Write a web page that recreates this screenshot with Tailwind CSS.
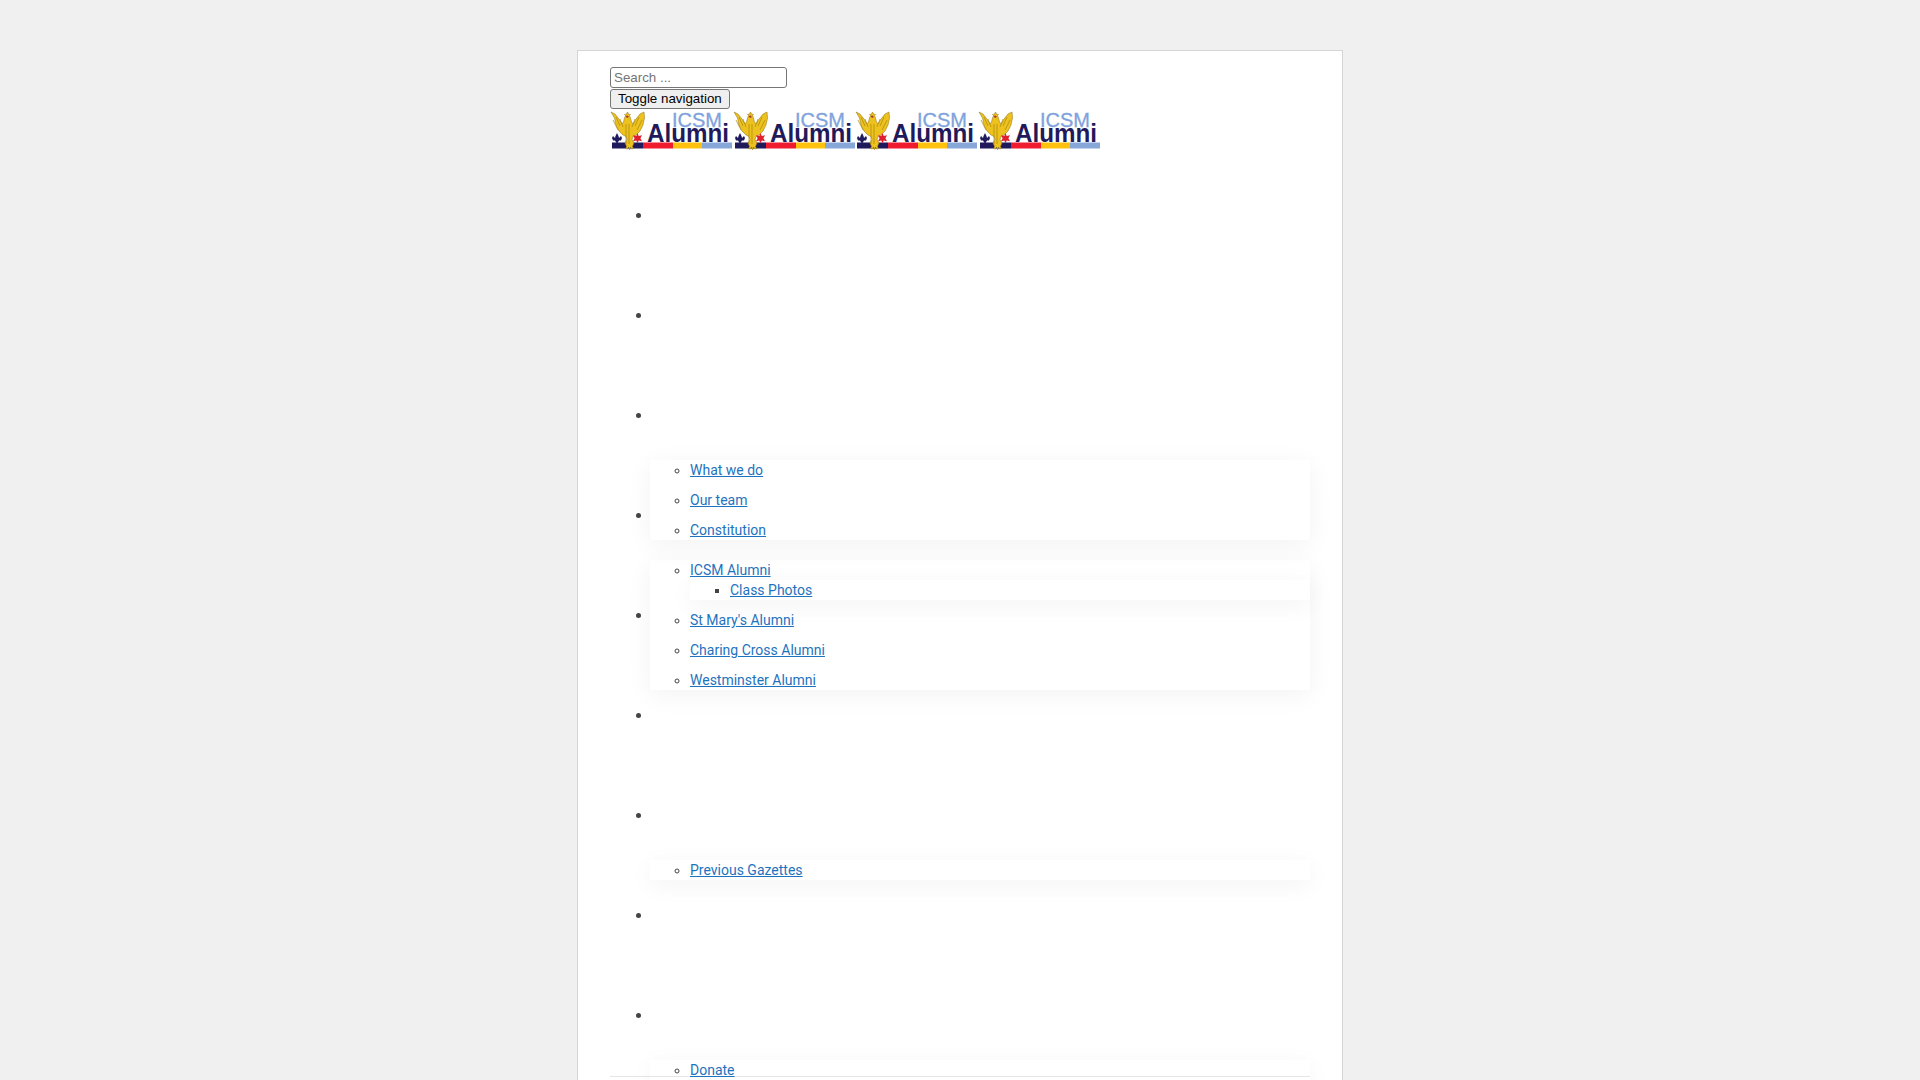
<!DOCTYPE html>
<html lang="en">
<head>
  <meta charset="UTF-8" />
  <meta name="viewport" content="width=device-width, initial-scale=1.0" />
  <title>ICSM Alumni</title>
  <script src="https://cdn.jsdelivr.net/npm/@tailwindcss/browser@4"></script>
</head>
<body class="bg-[#f0f0f0] h-screen overflow-hidden font-['Roboto',sans-serif] text-sm leading-5 text-[#444]">
  <div class="w-[766px] mx-auto mt-[50px] bg-white border border-[#d5d5d5] px-8 pt-4 pb-16">
    <form class="h-[42px] flex flex-col items-start gap-[1px] font-['Liberation_Sans',sans-serif] text-[13.33px] leading-[15px] text-black">
      <input type="text" placeholder="Search ..." class="w-[177px] h-[21px] border border-[#767676] rounded-[3px] px-[3px] placeholder:text-[#757575]" />
      <button type="button" class="h-[21px] px-[7px] bg-[#efefef] border border-[#767676] rounded-[3px]">Toggle navigation</button>
    </form>

    <div class="flex h-[51px] items-start">
      <svg class="w-[122.5px] h-[44px] shrink-0" viewBox="0 0 122.5 44">
        <rect x="2" y="33.500" width="31" height="6" fill="#1f1a5c" />
        <rect x="33" y="33.500" width="30" height="6" fill="#ee1c2e" />
        <rect x="63" y="33.500" width="29" height="6" fill="#fec20e" />
        <rect x="92" y="33.500" width="30" height="6" fill="#86a7d8" />
        <text x="62" y="18" textLength="50" lengthAdjust="spacingAndGlyphs" font-family="Liberation Sans" font-size="19.5" fill="#7fa3dc" stroke="#7fa3dc" stroke-width=".3">ICSM</text>
        <text x="37" y="32.500" textLength="82" lengthAdjust="spacingAndGlyphs" font-family="Liberation Sans" font-weight="700" font-size="25" fill="#1f1a5c">Alumni</text>
        <path d="M1 3l4 2 4 5 3 5 1.500-2 1-4 1-2.500-1-1 2-.5 1-2 1 2 2 .5-1 1 1 2.500 1 4 1.500 2 3-5 4-5 4-2 .5 6-1.500 7-3 6-4 4-3 1.500-1 3 2 3.500-1.500 3.500 1 2-2 .5-1-2-1 3-1-3-1 2-2-.5 1-2-1.500-3.500 2-3.500-1-3-3-1.500-4-4-3-6-1.500-7z" fill="#edc21f" stroke="#8a6d10" stroke-width=".5" />
        <path d="M6 8l4 9M10 10l3 8M29 8l-4 9M25 10l-3 8M16 15v20M19 15v20M3 11l5 10M32 11l-5 10" stroke="#a8860f" stroke-width=".7" fill="none" />
        <path d="M15.500 7l2-.5 1.500 1.500-2 1z" fill="#a33" />
        <path d="M7 24l1.500 3 .5 2 2-2 1 2-1 2.500H9l-1.500 2.500h-1L5 31.500H3l-1-2.500 1-2 2 2 .5-2z" fill="#1f1a5c" />
        <path d="M27.500 24l1.200 3 3.300-.8-1.600 3 1.600 3-3.300-.8-1.200 3-1.200-3-3.300 .8 1.600-3-1.600-3 3.300 .8z" fill="#e0202e" />
      </svg>
      <svg class="w-[122.5px] h-[44px] shrink-0" viewBox="0 0 122.5 44">
        <rect x="2" y="33.500" width="31" height="6" fill="#1f1a5c" />
        <rect x="33" y="33.500" width="30" height="6" fill="#ee1c2e" />
        <rect x="63" y="33.500" width="29" height="6" fill="#fec20e" />
        <rect x="92" y="33.500" width="30" height="6" fill="#86a7d8" />
        <text x="62" y="18" textLength="50" lengthAdjust="spacingAndGlyphs" font-family="Liberation Sans" font-size="19.5" fill="#7fa3dc" stroke="#7fa3dc" stroke-width=".3">ICSM</text>
        <text x="37" y="32.500" textLength="82" lengthAdjust="spacingAndGlyphs" font-family="Liberation Sans" font-weight="700" font-size="25" fill="#1f1a5c">Alumni</text>
        <path d="M1 3l4 2 4 5 3 5 1.500-2 1-4 1-2.500-1-1 2-.5 1-2 1 2 2 .5-1 1 1 2.500 1 4 1.500 2 3-5 4-5 4-2 .5 6-1.500 7-3 6-4 4-3 1.500-1 3 2 3.500-1.500 3.500 1 2-2 .5-1-2-1 3-1-3-1 2-2-.5 1-2-1.500-3.500 2-3.500-1-3-3-1.500-4-4-3-6-1.500-7z" fill="#edc21f" stroke="#8a6d10" stroke-width=".5" />
        <path d="M6 8l4 9M10 10l3 8M29 8l-4 9M25 10l-3 8M16 15v20M19 15v20M3 11l5 10M32 11l-5 10" stroke="#a8860f" stroke-width=".7" fill="none" />
        <path d="M15.500 7l2-.5 1.500 1.500-2 1z" fill="#a33" />
        <path d="M7 24l1.500 3 .5 2 2-2 1 2-1 2.500H9l-1.500 2.500h-1L5 31.500H3l-1-2.500 1-2 2 2 .5-2z" fill="#1f1a5c" />
        <path d="M27.500 24l1.200 3 3.300-.8-1.600 3 1.600 3-3.300-.8-1.200 3-1.200-3-3.300 .8 1.600-3-1.600-3 3.300 .8z" fill="#e0202e" />
      </svg>
      <svg class="w-[122.5px] h-[44px] shrink-0" viewBox="0 0 122.5 44">
        <rect x="2" y="33.500" width="31" height="6" fill="#1f1a5c" />
        <rect x="33" y="33.500" width="30" height="6" fill="#ee1c2e" />
        <rect x="63" y="33.500" width="29" height="6" fill="#fec20e" />
        <rect x="92" y="33.500" width="30" height="6" fill="#86a7d8" />
        <text x="62" y="18" textLength="50" lengthAdjust="spacingAndGlyphs" font-family="Liberation Sans" font-size="19.5" fill="#7fa3dc" stroke="#7fa3dc" stroke-width=".3">ICSM</text>
        <text x="37" y="32.500" textLength="82" lengthAdjust="spacingAndGlyphs" font-family="Liberation Sans" font-weight="700" font-size="25" fill="#1f1a5c">Alumni</text>
        <path d="M1 3l4 2 4 5 3 5 1.500-2 1-4 1-2.500-1-1 2-.5 1-2 1 2 2 .5-1 1 1 2.500 1 4 1.500 2 3-5 4-5 4-2 .5 6-1.500 7-3 6-4 4-3 1.500-1 3 2 3.500-1.500 3.500 1 2-2 .5-1-2-1 3-1-3-1 2-2-.5 1-2-1.500-3.500 2-3.500-1-3-3-1.500-4-4-3-6-1.500-7z" fill="#edc21f" stroke="#8a6d10" stroke-width=".5" />
        <path d="M6 8l4 9M10 10l3 8M29 8l-4 9M25 10l-3 8M16 15v20M19 15v20M3 11l5 10M32 11l-5 10" stroke="#a8860f" stroke-width=".7" fill="none" />
        <path d="M15.500 7l2-.5 1.500 1.500-2 1z" fill="#a33" />
        <path d="M7 24l1.500 3 .5 2 2-2 1 2-1 2.500H9l-1.500 2.500h-1L5 31.500H3l-1-2.500 1-2 2 2 .5-2z" fill="#1f1a5c" />
        <path d="M27.500 24l1.200 3 3.300-.8-1.600 3 1.600 3-3.300-.8-1.200 3-1.200-3-3.300 .8 1.600-3-1.600-3 3.300 .8z" fill="#e0202e" />
      </svg>
      <svg class="w-[122.5px] h-[44px] shrink-0" viewBox="0 0 122.5 44">
        <rect x="2" y="33.500" width="31" height="6" fill="#1f1a5c" />
        <rect x="33" y="33.500" width="30" height="6" fill="#ee1c2e" />
        <rect x="63" y="33.500" width="29" height="6" fill="#fec20e" />
        <rect x="92" y="33.500" width="30" height="6" fill="#86a7d8" />
        <text x="62" y="18" textLength="50" lengthAdjust="spacingAndGlyphs" font-family="Liberation Sans" font-size="19.5" fill="#7fa3dc" stroke="#7fa3dc" stroke-width=".3">ICSM</text>
        <text x="37" y="32.500" textLength="82" lengthAdjust="spacingAndGlyphs" font-family="Liberation Sans" font-weight="700" font-size="25" fill="#1f1a5c">Alumni</text>
        <path d="M1 3l4 2 4 5 3 5 1.500-2 1-4 1-2.500-1-1 2-.5 1-2 1 2 2 .5-1 1 1 2.500 1 4 1.500 2 3-5 4-5 4-2 .5 6-1.500 7-3 6-4 4-3 1.500-1 3 2 3.500-1.500 3.500 1 2-2 .5-1-2-1 3-1-3-1 2-2-.5 1-2-1.500-3.500 2-3.500-1-3-3-1.500-4-4-3-6-1.500-7z" fill="#edc21f" stroke="#8a6d10" stroke-width=".5" />
        <path d="M6 8l4 9M10 10l3 8M29 8l-4 9M25 10l-3 8M16 15v20M19 15v20M3 11l5 10M32 11l-5 10" stroke="#a8860f" stroke-width=".7" fill="none" />
        <path d="M15.500 7l2-.5 1.500 1.500-2 1z" fill="#a33" />
        <path d="M7 24l1.500 3 .5 2 2-2 1 2-1 2.500H9l-1.500 2.500h-1L5 31.500H3l-1-2.500 1-2 2 2 .5-2z" fill="#1f1a5c" />
        <path d="M27.500 24l1.200 3 3.300-.8-1.600 3 1.600 3-3.300-.8-1.200 3-1.200-3-3.300 .8 1.600-3-1.600-3 3.300 .8z" fill="#e0202e" />
      </svg>
    </div>

    <nav class="h-[917px] border-b border-[#e5e5e5]">
      <ul class="text-[#1e73be]">
        <li class="flex h-[100px] items-start">
          <span class="w-10 pt-[53px] pl-[26px] shrink-0"><span class="block size-[5px] rounded-full bg-[#444]"></span></span>
        </li>
        <li class="flex h-[100px] items-start">
          <span class="w-10 pt-[53px] pl-[26px] shrink-0"><span class="block size-[5px] rounded-full bg-[#444]"></span></span>
        </li>
        <li class="flex h-[100px] items-start">
          <span class="w-10 pt-[53px] pl-[26px] shrink-0"><span class="block size-[5px] rounded-full bg-[#444]"></span></span>
        </li>
        <li class="flex h-[100px] items-start">
          <span class="w-10 pt-[53px] pl-[26px] shrink-0"><span class="block size-[5px] rounded-full bg-[#444]"></span></span>
          <ul class="flex-1 pl-10 list-[circle] flex flex-col gap-[10px] shadow-[0_5px_25px_rgba(0,0,0,0.05)] marker:text-[#444]">
            <li><a href="#" class="underline">What we do</a></li>
            <li><a href="#" class="underline">Our team</a></li>
            <li><a href="#" class="underline">Constitution</a></li>
          </ul>
        </li>
        <li class="flex h-[100px] items-start">
          <span class="w-10 pt-[53px] pl-[26px] shrink-0"><span class="block size-[5px] rounded-full bg-[#444]"></span></span>
          <ul class="flex-1 pl-10 list-[circle] flex flex-col gap-[10px] shadow-[0_5px_25px_rgba(0,0,0,0.05)] marker:text-[#444]">
            <li>
              <a href="#" class="underline">ICSM Alumni</a>
              <ul class="pl-10 list-[square] shadow-[0_5px_25px_rgba(0,0,0,0.05)] marker:text-[#444]">
                <li><a href="#" class="underline">Class Photos</a></li>
              </ul>
            </li>
            <li><a href="#" class="underline">St Mary's Alumni</a></li>
            <li><a href="#" class="underline">Charing Cross Alumni</a></li>
            <li><a href="#" class="underline">Westminster Alumni</a></li>
          </ul>
        </li>
        <li class="flex h-[100px] items-start">
          <span class="w-10 pt-[53px] pl-[26px] shrink-0"><span class="block size-[5px] rounded-full bg-[#444]"></span></span>
        </li>
        <li class="flex h-[100px] items-start">
          <span class="w-10 pt-[53px] pl-[26px] shrink-0"><span class="block size-[5px] rounded-full bg-[#444]"></span></span>
        </li>
        <li class="flex h-[100px] items-start">
          <span class="w-10 pt-[53px] pl-[26px] shrink-0"><span class="block size-[5px] rounded-full bg-[#444]"></span></span>
          <ul class="flex-1 pl-10 list-[circle] flex flex-col gap-[10px] shadow-[0_5px_25px_rgba(0,0,0,0.05)] marker:text-[#444]">
            <li><a href="#" class="underline">Previous Gazettes</a></li>
          </ul>
        </li>
        <li class="flex h-[100px] items-start">
          <span class="w-10 pt-[53px] pl-[26px] shrink-0"><span class="block size-[5px] rounded-full bg-[#444]"></span></span>
        </li>
        <li class="flex h-[100px] items-start">
          <span class="w-10 pt-[53px] pl-[26px] shrink-0"><span class="block size-[5px] rounded-full bg-[#444]"></span></span>
          <ul class="flex-1 pl-10 list-[circle] flex flex-col gap-[10px] shadow-[0_5px_25px_rgba(0,0,0,0.05)] marker:text-[#444]">
            <li><a href="#" class="underline">Donate</a></li>
          </ul>
        </li>
      </ul>
    </nav>
  </div>
</body>
</html>
